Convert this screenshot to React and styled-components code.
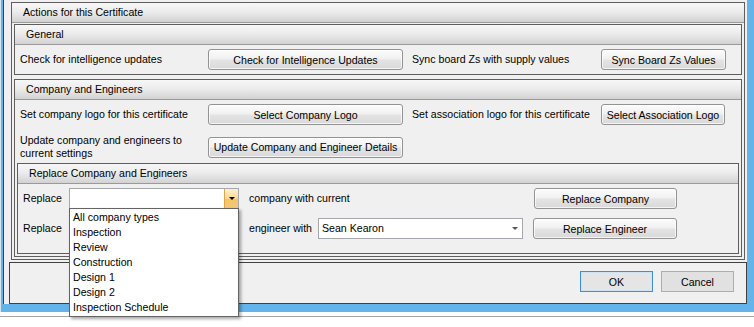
import React from 'react';
import styled, { createGlobalStyle } from 'styled-components';

const GlobalStyle = createGlobalStyle`
  html, body { margin: 0; padding: 0; background: #fff; }
  body {
    font-family: "Liberation Sans", Arial, sans-serif;
    font-size: 10.6px;
    color: #000;
  }
  * { box-sizing: border-box; }
`;

const Page = styled.div`
  width: 754px;
  height: 327px;
  overflow: hidden;
  position: relative;
  background: #fff;
`;

const Frame = styled.div`
  height: 312px;
  border-left: 1px solid #d9e6ef;
  background: #63b4ea;
  padding: 0 7px 8px 2px;
  display: flex;
`;

const Client = styled.div`
  flex: 1;
  background: #f0f0f0;
  border-left: 1px solid #404040;
  display: flex;
  flex-direction: column;
`;

const Main = styled.div`
  padding: 2px 2px 0 7px;
`;

const Group = styled.div`
  border: 1px solid #5e5e5e;
  background: #f0f0f0;
`;

const GroupHeader = styled.div`
  height: 20px;
  line-height: 19px;
  padding-left: 11px;
  border-bottom: 1px solid #9a9a9a;
  background: linear-gradient(#f7f7f7 0%, #ececec 45%, #dcdcdc 80%, #d2d2d2 100%);
  white-space: nowrap;
`;

const GroupBody = styled.div`
  display: flex;
  flex-direction: column;
  gap: ${p => p.$gap || 0}px;
  padding: ${p => p.$pad};
`;

const Row = styled.div`
  display: flex;
  align-items: center;
  height: ${p => p.$h || 21}px;
  padding-left: ${p => p.$pl || 0}px;
  margin-bottom: ${p => p.$mb || 0}px;
`;

const Label = styled.div`
  width: ${p => p.$w}px;
  flex: none;
  padding-left: ${p => p.$pl || 0}px;
  line-height: 13px;
  white-space: ${p => (p.$wrap ? 'normal' : 'nowrap')};
`;

const Btn = styled.button`
  width: ${p => p.$w}px;
  height: 21px;
  flex: none;
  margin-left: ${p => p.$ml || 0}px;
  padding: 0;
  border: 1px solid #939393;
  border-radius: 3px;
  background: linear-gradient(#fcfcfc 0%, #f1f1f1 45%, #e3e3e3 55%, #d9d9d9 100%);
  box-shadow: inset 0 0 0 1px rgba(255, 255, 255, 0.7);
  font: inherit;
  color: #000;
  white-space: nowrap;
`;

const DialogBtn = styled.button`
  width: 73px;
  height: 21px;
  padding: 0;
  border: 1px solid ${p => (p.$default ? '#3f8fd6' : '#adadad')};
  background: ${p => (p.$default ? '#e5e5e5' : '#e1e1e1')};
  box-shadow: ${p => (p.$default ? 'inset 0 0 0 1px #cfe3f5' : 'none')};
  font: inherit;
  color: #000;
`;

const Combo = styled.div`
  position: relative;
  width: ${p => p.$w}px;
  height: 21px;
  flex: none;
  border: 1px solid #a5a7ad;
  background: #fff;
  padding-left: 3px;
  line-height: 19px;
  white-space: nowrap;
`;

const ArrowButton = styled.div`
  position: absolute;
  top: 0;
  right: 0;
  width: 14px;
  height: 19px;
  border-left: 1px solid #e0a446;
  background: linear-gradient(#fdf0cc 0%, #fad992 50%, #f6c464 51%, #f4c878 100%);
  display: flex;
  align-items: center;
  justify-content: center;
`;

const Caret = styled.div`
  width: 0;
  height: 0;
  border-left: 3px solid transparent;
  border-right: 3px solid transparent;
  border-top: 3px solid ${p => p.$color || '#000'};
`;

const PlainArrow = styled.div`
  position: absolute;
  top: 0;
  right: 4px;
  height: 19px;
  display: flex;
  align-items: center;
`;

const DropList = styled.div`
  position: absolute;
  top: 19px;
  left: -1px;
  width: 170px;
  border: 1px solid #646464;
  background: #fff;
  padding: 1px 0;
  box-shadow: 2px 2px 3px rgba(0, 0, 0, 0.35);
  z-index: 10;
`;

const DropItem = styled.div`
  height: 15px;
  line-height: 15px;
  padding-left: 3px;
  white-space: nowrap;
`;

const ButtonPanel = styled.div`
  flex: 1;
  margin: 2px 0 0 5px;
  border: 1px solid #404040;
  display: flex;
  justify-content: flex-end;
  align-items: flex-start;
  gap: 8px;
  padding: 8px 12px 0 0;
`;

const Ground = styled.div`
  margin-top: 4px;
  border-top: 1px solid #a6a6a6;
`;

const companyTypes = [
  'All company types',
  'Inspection',
  'Review',
  'Construction',
  'Design 1',
  'Design 2',
  'Inspection Schedule',
];

export default function App() {
  return (
    <Page>
      <GlobalStyle />
      <Frame>
        <Client>
          <Main>
            <Group>
              <GroupHeader>Actions for this Certificate</GroupHeader>
              <GroupBody $pad="1px 2px 2px 2px" $gap={4}>
                <Group>
                  <GroupHeader>General</GroupHeader>
                  <GroupBody $pad="4px 0 4px 5px">
                    <Row>
                      <Label $w={188}>Check for intelligence updates</Label>
                      <Btn $w={195}>Check for Intelligence Updates</Btn>
                      <Label $w={198} $pl={9}>Sync board Zs with supply values</Label>
                      <Btn $w={125}>Sync Board Zs Values</Btn>
                    </Row>
                  </GroupBody>
                </Group>
                <Group>
                  <GroupHeader>Company and Engineers</GroupHeader>
                  <GroupBody $pad="4px 2px 2px 2px">
                    <Row $pl={3} $mb={9}>
                      <Label $w={188}>Set company logo for this certificate</Label>
                      <Btn $w={195}>Select Company Logo</Btn>
                      <Label $w={198} $pl={9}>Set association logo for this certificate</Label>
                      <Btn $w={124}>Select Association Logo</Btn>
                    </Row>
                    <Row $pl={3} $h={26} $mb={3}>
                      <Label $w={188} $wrap>Update company and engineers to current settings</Label>
                      <Btn $w={195}>Update Company and Engineer Details</Btn>
                    </Row>
                    <Group>
                      <GroupHeader>Replace Company and Engineers</GroupHeader>
                      <GroupBody $pad="4px 0 14px 5px" $gap={9}>
                        <Row>
                          <Label $w={46}>Replace</Label>
                          <Combo $w={170}>
                            <ArrowButton>
                              <Caret />
                            </ArrowButton>
                            <DropList>
                              {companyTypes.map(t => (
                                <DropItem key={t}>{t}</DropItem>
                              ))}
                            </DropList>
                          </Combo>
                          <Label $w={295} $pl={10}>company with current</Label>
                          <Btn $w={143}>Replace Company</Btn>
                        </Row>
                        <Row>
                          <Label $w={46}>Replace</Label>
                          <Combo $w={170}>
                            <PlainArrow>
                              <Caret $color="#555" />
                            </PlainArrow>
                          </Combo>
                          <Label $w={79} $pl={10}>engineer with</Label>
                          <Combo $w={205}>
                            Sean Kearon
                            <PlainArrow>
                              <Caret $color="#555" />
                            </PlainArrow>
                          </Combo>
                          <Btn $w={144} $ml={10}>Replace Engineer</Btn>
                        </Row>
                      </GroupBody>
                    </Group>
                  </GroupBody>
                </Group>
              </GroupBody>
            </Group>
          </Main>
          <ButtonPanel>
            <DialogBtn $default>OK</DialogBtn>
            <DialogBtn>Cancel</DialogBtn>
          </ButtonPanel>
        </Client>
      </Frame>
      <Ground />
    </Page>
  );
}
